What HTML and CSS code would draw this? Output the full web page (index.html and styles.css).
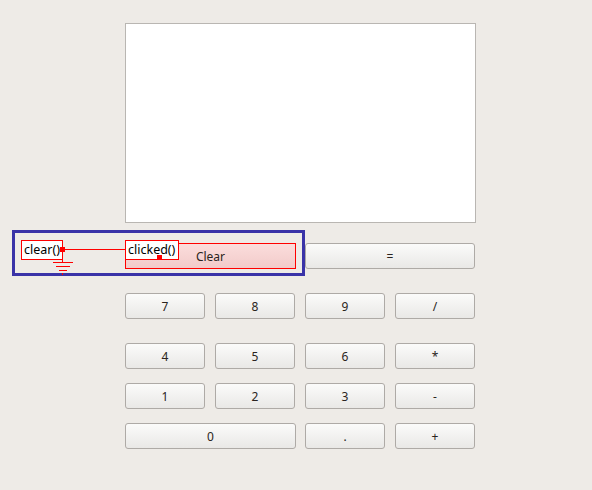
FILE: index.html
```html
<!DOCTYPE html>
<html lang="en">
<head>
    <meta charset="UTF-8">
    <title>Calculator - Signals/Slots</title>
    <link rel="stylesheet" href="styles.css">
</head>
<body>

<!-- form -->
<div class="form">
    <div class="display"></div>

    <div class="keys row-top">
        <button class="key wide selected">Clear</button>
        <button class="key wide">=</button>
    </div>
    <div class="keys row-gap-lg">
        <button class="key">7</button>
        <button class="key">8</button>
        <button class="key">9</button>
        <button class="key">/</button>
    </div>
    <div class="keys row-gap-lg">
        <button class="key">4</button>
        <button class="key">5</button>
        <button class="key">6</button>
        <button class="key">*</button>
    </div>
    <div class="keys row-gap-sm">
        <button class="key">1</button>
        <button class="key">2</button>
        <button class="key">3</button>
        <button class="key">-</button>
    </div>
    <div class="keys row-gap-sm">
        <button class="key wide">0</button>
        <button class="key">.</button>
        <button class="key">+</button>
    </div>
</div>

<!-- connection overlay -->
<svg class="wires" width="592" height="490" viewBox="0 0 592 490" shape-rendering="crispEdges">
    <rect x="13.5" y="231.5" width="290" height="43" fill="none" stroke="#3a33a8" stroke-width="3"/>
    <rect x="62" y="251" width="1" height="11" fill="#ff0000"/>
    <rect x="53" y="262" width="20" height="1" fill="#ff0000"/>
    <rect x="56" y="266" width="14" height="1" fill="#ff0000"/>
    <rect x="59" y="270" width="8" height="1" fill="#ff0000"/>
    <rect x="62" y="273" width="1" height="2" fill="#ff0000"/>
</svg>
<div class="wire"></div>
<div class="slot slot-clear">clear()</div>
<div class="slot slot-clicked">clicked()</div>
<div class="dot dot-clear"></div>
<div class="dot dot-clicked"></div>

</body>
</html>
```
FILE: styles.css
```css
body {
    margin: 0;
    background-color: #eeebe7;
    font-family: "Noto Sans", "DejaVu Sans", sans-serif;
    width: 592px;
    height: 490px;
    overflow: hidden;
}
.form {
    padding: 23px 0 0 125px;
    width: 350px;
}
.display {
    width: 351px;
    height: 200px;
    box-sizing: border-box;
    background-color: #ffffff;
    border: 1px solid #b9b6b2;
}
.keys {
    display: grid;
    grid-template-columns: repeat(4, 80px);
    column-gap: 10px;
}
.row-top {
    margin-top: 20px;
}
.row-gap-lg {
    margin-top: 24px;
}
.row-gap-sm {
    margin-top: 14px;
}
.key {
    height: 26px;
    box-sizing: border-box;
    border: 1px solid #aeaaa6;
    border-radius: 3px;
    background: linear-gradient(#fbfbfa, #e9e8e6);
    font-family: "Noto Sans", "DejaVu Sans", sans-serif;
    font-size: 12px;
    color: #2a2420;
    padding: 0;
}
.key.wide {
    grid-column: span 2;
    width: 171px;
}
.keys .key.wide + .key.wide {
    width: 170px;
}
.key.selected {
    border: 1px solid #ff0000;
    border-radius: 0;
    background: linear-gradient(#fbdddc, #f2cbca);
}
.wires {
    position: absolute;
    left: 0;
    top: 0;
}
.wire {
    position: absolute;
    left: 64px;
    top: 249px;
    width: 61px;
    height: 0;
    border-top: 1px solid #ff0000;
}
.slot {
    position: absolute;
    box-sizing: border-box;
    height: 20px;
    line-height: 18px;
    padding: 0 2px;
    background-color: #ffffff;
    border: 1px solid #ff0000;
    font-size: 12.5px;
    color: #000000;
    white-space: nowrap;
}
.slot-clear {
    left: 21px;
    top: 240px;
    width: 42px;
}
.slot-clicked {
    left: 125px;
    top: 240px;
    width: 54px;
}
.dot {
    position: absolute;
    width: 5px;
    height: 5px;
    background-color: #ff0000;
}
.dot-clear {
    left: 60px;
    top: 247px;
}
.dot-clicked {
    left: 157px;
    top: 255px;
}
```
